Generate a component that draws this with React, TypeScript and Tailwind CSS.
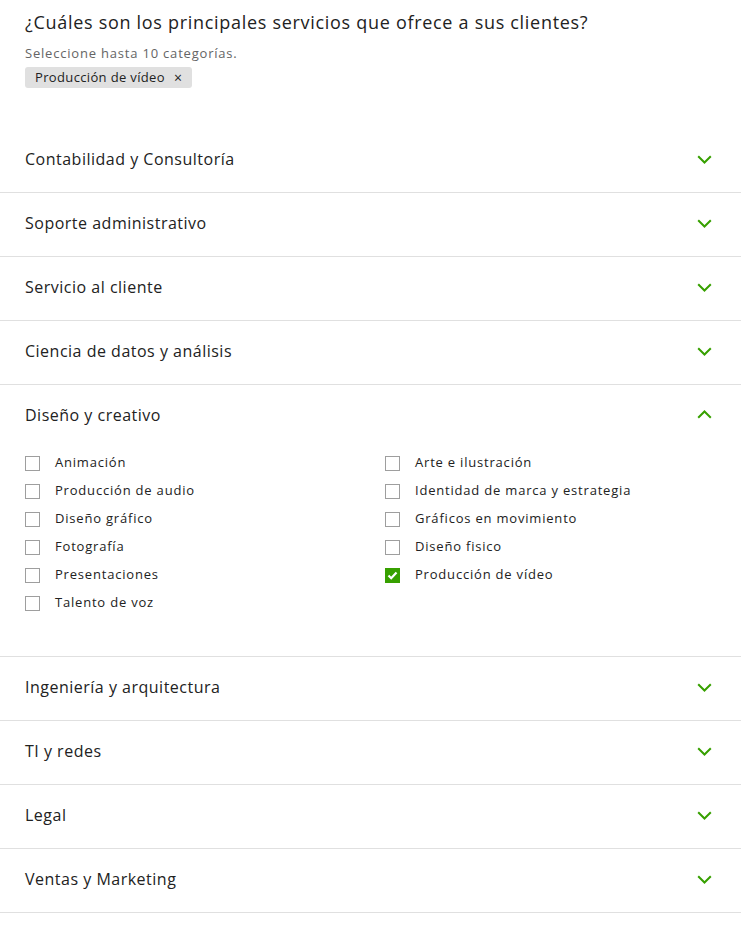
import { useState } from "react";

const categories: { name: string; items?: string[][] }[] = [
  { name: "Contabilidad y Consultoría" },
  { name: "Soporte administrativo" },
  { name: "Servicio al cliente" },
  { name: "Ciencia de datos y análisis" },
  {
    name: "Diseño y creativo",
    items: [
      ["Animación", "Producción de audio", "Diseño gráfico", "Fotografía", "Presentaciones", "Talento de voz"],
      ["Arte e ilustración", "Identidad de marca y estrategia", "Gráficos en movimiento", "Diseño fisico", "Producción de vídeo"],
    ],
  },
  { name: "Ingeniería y arquitectura" },
  { name: "TI y redes" },
  { name: "Legal" },
  { name: "Ventas y Marketing" },
];

const Chevron = ({ up }: { up?: boolean }) => (
  <svg width="15" height="9" viewBox="0 0 15 9" className={up ? "mb-1 rotate-180" : "mb-[3px]"}>
    <path d="M1.2 1.2 L7.5 7.5 L13.8 1.2" fill="none" stroke="#37a000" strokeWidth="2" />
  </svg>
);

const Check = ({ label, checked }: { label: string; checked: boolean }) => (
  <label className="flex h-7 items-center gap-[15px] text-[13px] tracking-[0.8px] text-[#222]">
    {checked ? (
      <span className="flex h-[15px] w-[15px] items-center justify-center bg-[#37a000]">
        <svg width="11" height="9" viewBox="0 0 11 9">
          <path d="M1.5 4.5 L4.2 7.2 L9.5 1.5" fill="none" stroke="white" strokeWidth="2.2" />
        </svg>
      </span>
    ) : (
      <span className="h-[15px] w-[15px] border border-[#9e9e9e] bg-white" />
    )}
    {label}
  </label>
);

export default function App() {
  const [selected] = useState(["Producción de vídeo"]);
  return (
    <div className="min-h-[934px] w-[741px] bg-white font-['Open_Sans',sans-serif] text-[#222]">
      <div className="h-[129px] px-[25px] pt-[10px]">
        <h1 className="text-[18px] leading-6 tracking-[0.7px] text-[#222]">¿Cuáles son los principales servicios que ofrece a sus clientes?</h1>
        <p className="mt-[11px] text-[13px] leading-4 tracking-[0.8px] text-[#656565]">Seleccione hasta 10 categorías.</p>
        <div className="mt-[6px] flex gap-2">
          {selected.map((s) => (
            <span key={s} className="flex h-[21px] items-center gap-[9px] rounded-[3px] bg-[#e0e0e0] px-[10px] text-[13px] tracking-[0.35px] text-[#222]">
              {s}
              <span className="text-[14px] leading-none">×</span>
            </span>
          ))}
        </div>
      </div>
      {categories.map((c) => (
        <div key={c.name} className="border-b border-[#e0e0e0]">
          <div className="flex h-[63px] items-center justify-between pl-[25px] pr-[29px]">
            <span className="mb-1 text-[16px] tracking-[0.5px]">{c.name}</span>
            <Chevron up={!!c.items} />
          </div>
          {c.items && (
            <div className="grid grid-cols-[360px_1fr] px-[25px] pt-px pb-[39px]">
              {c.items.map((col, i) => (
                <div key={i} className="flex flex-col">
                  {col.map((it) => (
                    <Check key={it} label={it} checked={selected.includes(it)} />
                  ))}
                </div>
              ))}
            </div>
          )}
        </div>
      ))}
    </div>
  );
}
